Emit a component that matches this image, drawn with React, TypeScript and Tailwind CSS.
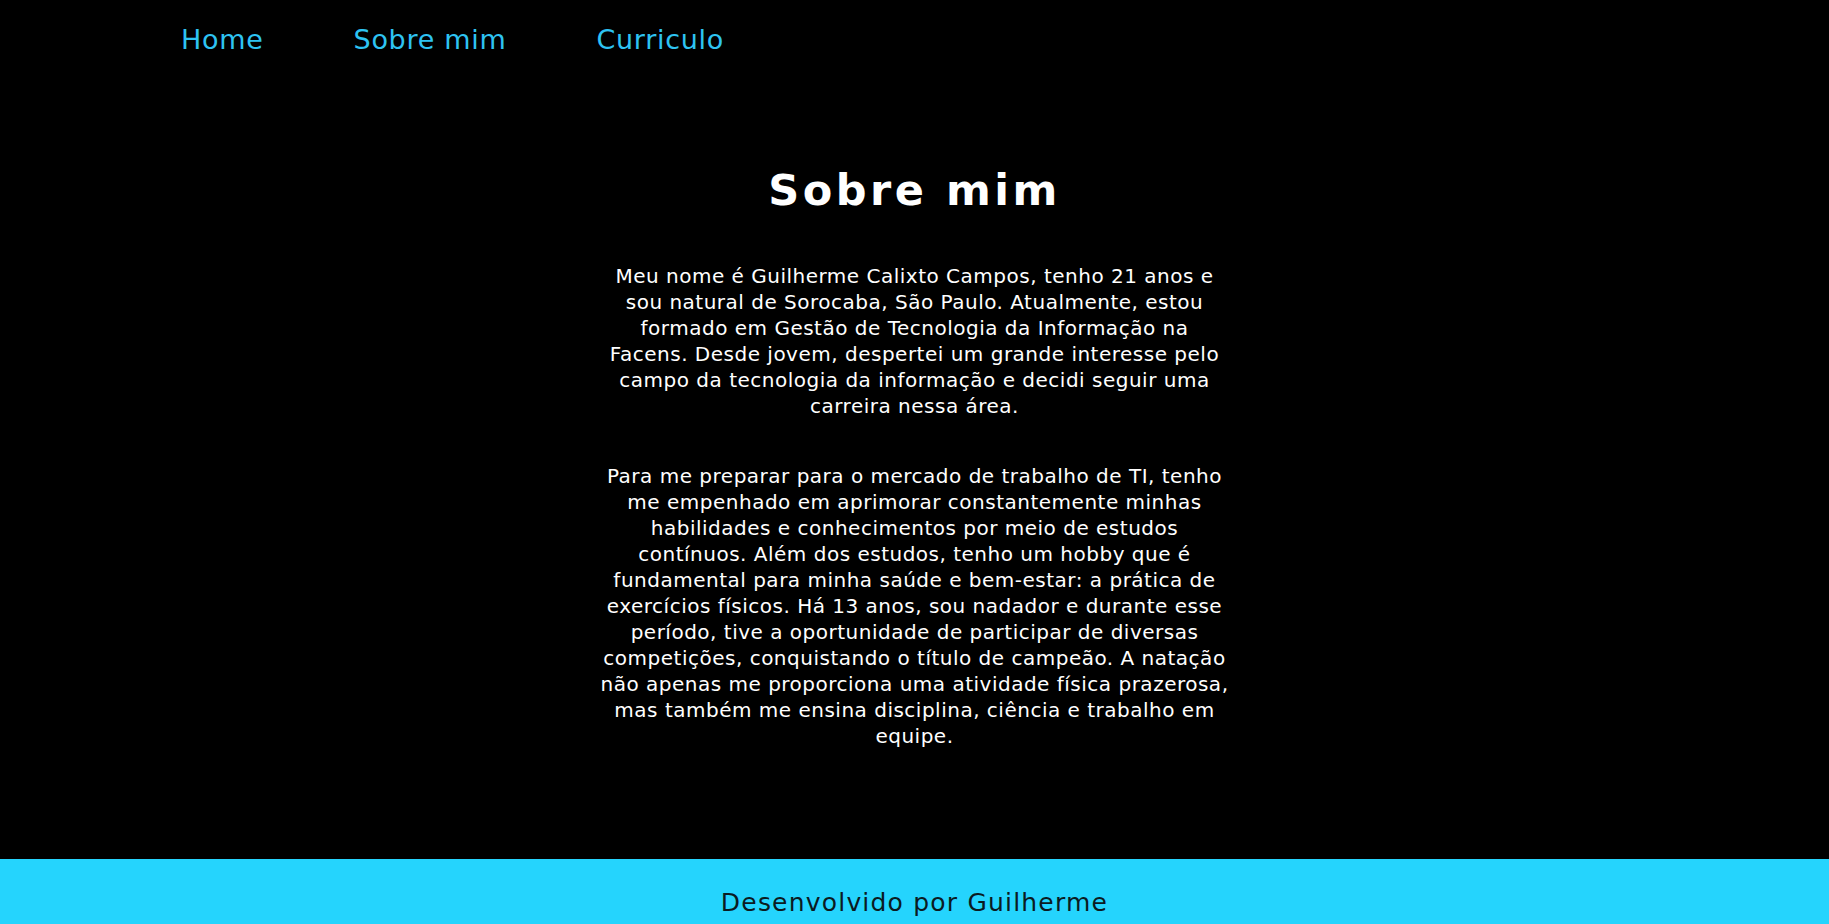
import React from "react";

const p1 = [
  "Meu nome é Guilherme Calixto Campos, tenho 21 anos e",
  "sou natural de Sorocaba, São Paulo. Atualmente, estou",
  "formado em Gestão de Tecnologia da Informação na",
  "Facens. Desde jovem, despertei um grande interesse pelo",
  "campo da tecnologia da informação e decidi seguir uma",
  "carreira nessa área.",
];

const p2 = [
  "Para me preparar para o mercado de trabalho de TI, tenho",
  "me empenhado em aprimorar constantemente minhas",
  "habilidades e conhecimentos por meio de estudos",
  "contínuos. Além dos estudos, tenho um hobby que é",
  "fundamental para minha saúde e bem-estar: a prática de",
  "exercícios físicos. Há 13 anos, sou nadador e durante esse",
  "período, tive a oportunidade de participar de diversas",
  "competições, conquistando o título de campeão. A natação",
  "não apenas me proporciona uma atividade física prazerosa,",
  "mas também me ensina disciplina, ciência e trabalho em",
  "equipe.",
];

function Para({ lines, className }: { lines: string[]; className?: string }) {
  return (
    <p className={className}>
      {lines.map((l, i) => (
        <React.Fragment key={i}>
          {l}
          {i < lines.length - 1 && <br />}
        </React.Fragment>
      ))}
    </p>
  );
}

export default function App() {
  return (
    <div className="min-h-screen bg-black flex flex-col [font-family:'DejaVu_Sans',sans-serif]">
      <nav className="flex gap-[90px] pl-[181px] pt-[23px] h-[64px] text-[27px] leading-[34px] tracking-[0.7px] text-[#2ec3f2]">
        <a href="#">Home</a>
        <a href="#">Sobre mim</a>
        <a href="#">Curriculo</a>
      </nav>
      <main className="flex flex-col items-center pt-[100px] pb-[110px]">
        <h1 className="text-white text-[43px] leading-[52px] font-bold tracking-[3.5px]">
          Sobre mim
        </h1>
        <div className="mt-[47px] text-white text-[20px] leading-[26px] tracking-[0.5px] text-center">
          <Para lines={p1} />
          <Para lines={p2} className="mt-[44px]" />
        </div>
      </main>
      <footer className="bg-[#25d4fd] h-[66px] flex items-end justify-center pb-[6px]">
        <span className="text-[#0b1b22] text-[25px] leading-[32px] tracking-[1.2px]">Desenvolvido por Guilherme</span>
      </footer>
    </div>
  );
}
